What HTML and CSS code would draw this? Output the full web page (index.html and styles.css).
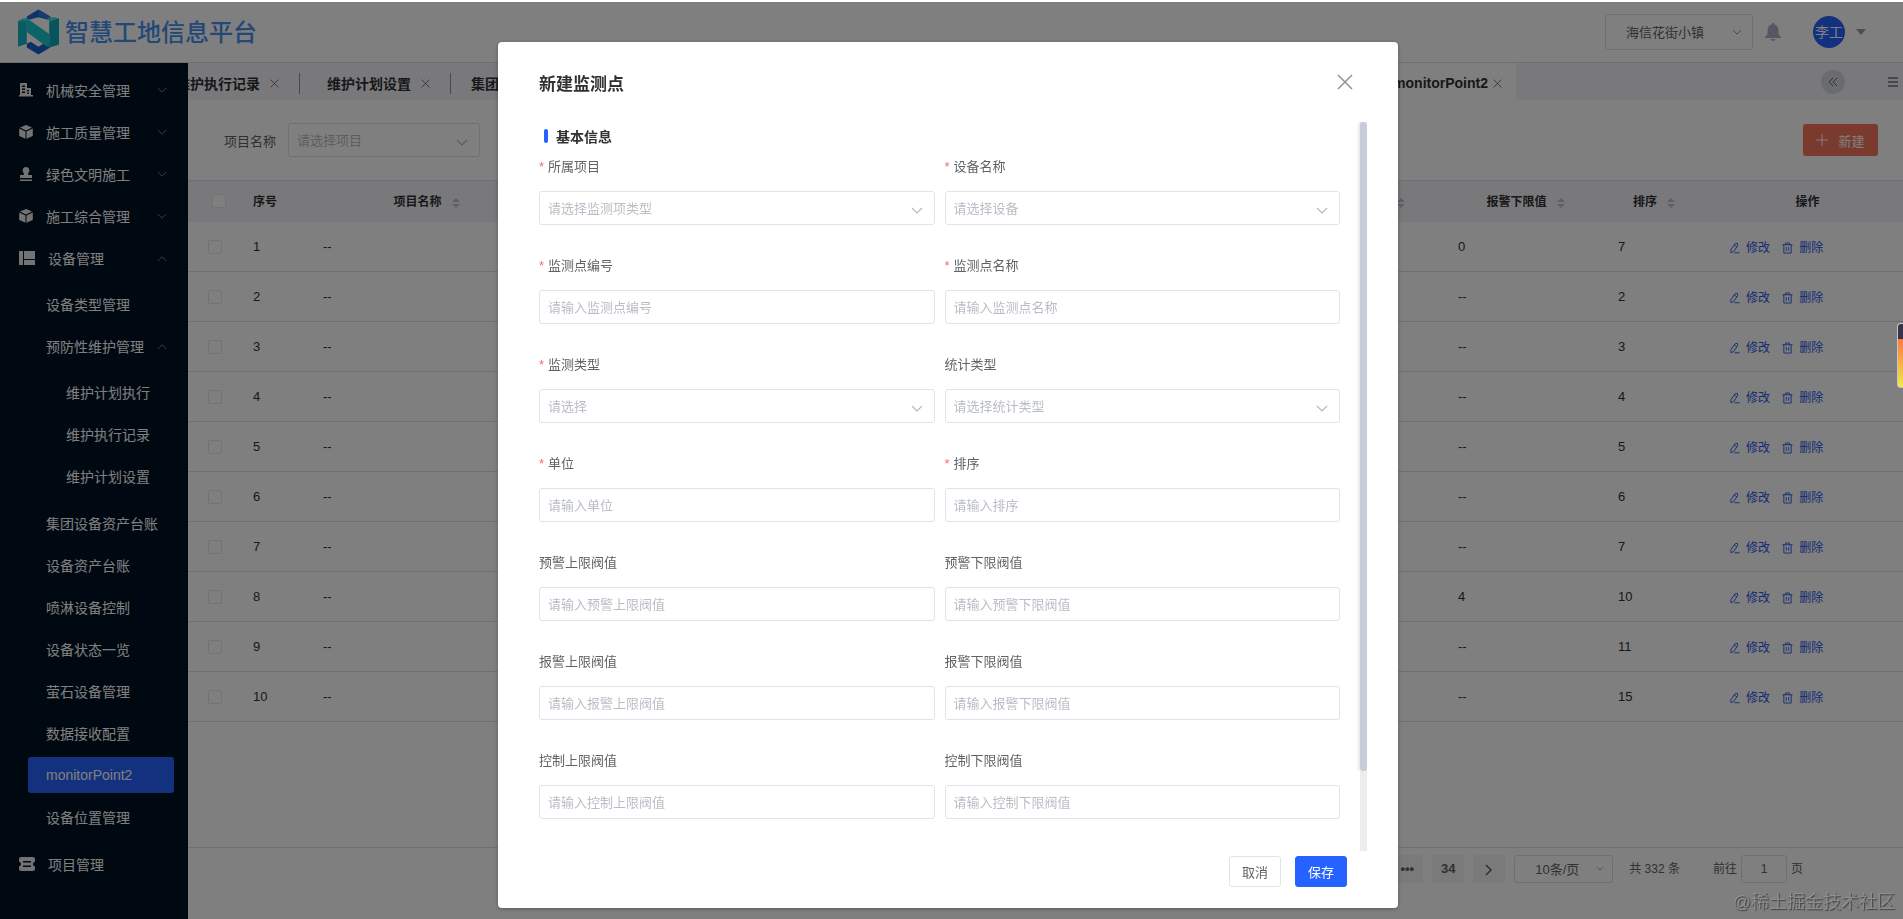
FILE: index.html
```html
<!DOCTYPE html>
<html lang="zh-CN">
<head>
    <meta charset="UTF-8">
    <meta name="viewport" content="width=device-width, initial-scale=1.0">
    <title>智慧工地信息平台</title>
    <link rel="stylesheet" href="styles.css">
</head>
<body>
    <!-- shared icons -->
    <svg class="sprite" aria-hidden="true">
        <symbol id="i-down" viewBox="0 0 12 8"><path d="M1 1l5 5 5-5" fill="none" stroke="currentColor"/></symbol>
        <symbol id="i-up" viewBox="0 0 12 8"><path d="M1 7l5-5 5 5" fill="none" stroke="currentColor"/></symbol>
        <symbol id="i-close" viewBox="0 0 16 16"><path d="M1 1l14 14M15 1L1 15" fill="none" stroke="currentColor" stroke-width="1.5"/></symbol>
        <symbol id="i-cube" viewBox="0 0 14 14"><path d="M7 0l6 2.6L7 5.4 1 2.6zM.2 3.6l6.3 2.8v7.4L.2 11zM13.8 3.6L7.5 6.4v7.4l6.3-2.8z" fill="currentColor"/></symbol>
        <symbol id="i-edit" viewBox="0 0 12 12"><path d="M6.500 1.500L9 .800 9.500 3.300 5 10 2 11 2 8zM6 11.200h5.500M6 3l2.500 1.600" fill="none" stroke="currentColor"/></symbol>
        <symbol id="i-trash" viewBox="0 0 12 12"><path d="M.5 2.500h11M2 2.500v9h8v-9M4 2.500v-2h4v2M4.700 5v4M7.300 5v4" fill="none" stroke="currentColor"/></symbol>
    </svg>

    <div class="app">
        <header class="topbar">
            <svg class="logo" viewBox="0 0 42 46">
                <path d="M21 0l12 7v4l-12-3-12 3V7z" fill="#1b66cf"/>
                <path d="M21 0l12 7v4l-12-5z" fill="#2f7be0"/>
                <path d="M21 46L9 39v-4l4-2 8 5 8-5 4 2v4z" fill="#1b5fc8"/>
                <path d="M0 12l9-3v26l-9 3z" fill="#12b5c5"/>
                <path d="M32 12l10-3v27l-10 3z" fill="#10a9b8"/>
                <path d="M9 9l23 16v14l-4-2L9 23z" fill="#18c8cc"/>
                <path d="M0 12l5-3 9 1-5 2zM32 12l-2-3 7-1 5 1z" fill="#3fd8dc"/>
            </svg>
            <span class="brand">智慧工地信息平台</span>
            <select class="project" aria-label="项目"><option>海信花街小镇</option></select>
            <svg class="bell" viewBox="0 0 16 18"><path d="M8 0c1 0 1.500.700 1.500 1.500C12 2.200 13.500 4.500 13.500 7v4.500L16 14v1H0v-1l2.500-2.500V7C2.500 4.500 4 2.200 6.500 1.500 6.500.700 7 0 8 0zM5.500 16h5c-.3 1.200-1.300 2-2.500 2s-2.200-.8-2.500-2z" fill="currentColor"/></svg>
            <span class="avatar">李工</span>
            <span class="caret"></span>
        </header>

        <div class="layout">
            <nav class="sidebar">
                <ul class="menu">
                    <li><a href="#"><svg class="ico" viewBox="0 0 14 14"><path d="M1 0h7v5h4v7h2v1.500H0V12h1zM3 2.500v1.500h3V2.500zM3 5.500V7h3V5.500zM3 8.500V10h3V8.500zM8 7v1.200h2V7zM8 9.500v1.200h2V9.500z" fill="currentColor" fill-rule="evenodd"/></svg>机械安全管理<svg class="arrow"><use href="#i-down"/></svg></a></li>
                    <li><a href="#"><svg class="ico"><use href="#i-cube"/></svg>施工质量管理<svg class="arrow"><use href="#i-down"/></svg></a></li>
                    <li><a href="#"><svg class="ico" viewBox="0 0 14 14"><path d="M7 0a3.500 3.500 0 0 1 2.200 6.200V8H13v3H1V8h3.800V6.200A3.500 3.500 0 0 1 7 0zM1 12.500h12V14H1z" fill="currentColor"/></svg>绿色文明施工<svg class="arrow"><use href="#i-down"/></svg></a></li>
                    <li><a href="#"><svg class="ico"><use href="#i-cube"/></svg>施工综合管理<svg class="arrow"><use href="#i-down"/></svg></a></li>
                    <li><a href="#"><svg class="ico ico-wide" viewBox="0 0 16 14"><path d="M0 0h4v14H0zM5 0h11v8H5zM5 9h11v5H5z" fill="currentColor"/></svg>设备管理<svg class="arrow"><use href="#i-up"/></svg></a></li>
                </ul>
                <ul class="menu sub">
                    <li><a href="#">设备类型管理</a></li>
                    <li><a href="#">预防性维护管理<svg class="arrow"><use href="#i-up"/></svg></a></li>
                </ul>
                <ul class="menu sub third">
                    <li><a href="#">维护计划执行</a></li>
                    <li><a href="#">维护执行记录</a></li>
                    <li><a href="#">维护计划设置</a></li>
                </ul>
                <ul class="menu sub last">
                    <li><a href="#">集团设备资产台账</a></li>
                    <li><a href="#">设备资产台账</a></li>
                    <li><a href="#">喷淋设备控制</a></li>
                    <li><a href="#">设备状态一览</a></li>
                    <li><a href="#">萤石设备管理</a></li>
                    <li><a href="#">数据接收配置</a></li>
                    <li><a href="#" class="active">monitorPoint2</a></li>
                    <li><a href="#">设备位置管理</a></li>
                </ul>
                <ul class="menu">
                    <li><a href="#"><svg class="ico ico-wide" viewBox="0 0 16 14"><path d="M2 0h12q2 0 2 2v2.500q-2 .5-2 2.500t2 2.500V12q0 2-2 2H2q-2 0-2-2V9.500Q2 9 2 7T0 4.500V2q0-2 2-2zM4 4v1.500h8V4zM4 8.500V10h8V8.500z" fill="currentColor" fill-rule="evenodd"/></svg>项目管理</a></li>
                </ul>
            </nav>

            <main class="content">
                <div class="tabs">
                    <div class="tab-list">
                        <a href="#" class="tab first">维护执行记录<svg><use href="#i-close"/></svg></a>
                        <a href="#" class="tab">维护计划设置<svg><use href="#i-close"/></svg></a>
                        <a href="#" class="tab">集团设备资产台账<svg><use href="#i-close"/></svg></a>
                        <a href="#" class="tab current">monitorPoint2<svg><use href="#i-close"/></svg></a>
                    </div>
                    <div class="tab-tools">
                        <button class="fold" aria-label="收起"><svg viewBox="0 0 10 10"><path d="M5 1L1 5l4 4M9 1L5 5l4 4" fill="none" stroke="currentColor"/></svg></button>
                        <button class="more" aria-label="更多"><svg viewBox="0 0 10 10"><path d="M0 1h10M0 5h10M0 9h10" stroke="currentColor" stroke-width="1.200"/></svg></button>
                    </div>
                </div>

                <div class="filter">
                    <label for="project">项目名称</label>
                    <select id="project" class="field"><option>请选择项目</option></select>
                    <button class="btn-new"><svg viewBox="0 0 12 12"><path d="M6 0v12M0 6h12" stroke="currentColor"/></svg>新建</button>
                </div>

                <div class="table-wrap">
                    <table>
                        <colgroup>
                            <col class="c-check"><col class="c-index"><col class="c-name"><col><col><col><col>
                            <col class="c-limit"><col class="c-limit"><col class="c-sort"><col class="c-op">
                        </colgroup>
                        <thead>
                            <tr>
                                <th class="check"><input type="checkbox" aria-label="全选"></th>
                                <th class="left">序号</th>
                                <th>项目名称<i class="sort"></i></th>
                                <th>设备名称<i class="sort"></i></th>
                                <th>监测点编号<i class="sort"></i></th>
                                <th>监测点名称<i class="sort"></i></th>
                                <th>监测类型<i class="sort"></i></th>
                                <th>报警上限值<i class="sort"></i></th>
                                <th>报警下限值<i class="sort"></i></th>
                                <th>排序<i class="sort"></i></th>
                                <th class="op-head">操作</th>
                            </tr>
                        </thead>
                        <tbody id="rows"></tbody>
                    </table>
                </div>

                <div class="pager">
                    <button class="page">•••</button>
                    <button class="page">34</button>
                    <button class="page" aria-label="下一页"><svg viewBox="0 0 8 12"><path d="M1 1l5 5-5 5" fill="none" stroke="currentColor" stroke-width="1.500"/></svg></button>
                    <select class="size" aria-label="每页条数"><option>10条/页</option></select>
                    <span class="total">共 332 条</span>
                    <label for="jump">前往</label>
                    <input id="jump" class="jump" type="text" value="1">
                    <span>页</span>
                </div>
            </main>
        </div>
    </div>

    <div class="mask">
        <div class="dialog" role="dialog" aria-labelledby="dialog-title">
            <div class="dialog-head">
                <h2 id="dialog-title">新建监测点</h2>
                <button class="close" aria-label="关闭"><svg><use href="#i-close"/></svg></button>
            </div>
            <div class="dialog-body">
                <form class="form">
                    <h3>基本信息</h3>
                    <div class="grid">
                        <div class="item required"><label for="f1">所属项目</label><select id="f1" class="field"><option>请选择监测项类型</option></select></div>
                        <div class="item required"><label for="f2">设备名称</label><select id="f2" class="field"><option>请选择设备</option></select></div>
                        <div class="item required"><label for="f3">监测点编号</label><input id="f3" class="field" type="text" placeholder="请输入监测点编号"></div>
                        <div class="item required"><label for="f4">监测点名称</label><input id="f4" class="field" type="text" placeholder="请输入监测点名称"></div>
                        <div class="item required"><label for="f5">监测类型</label><select id="f5" class="field"><option>请选择</option></select></div>
                        <div class="item"><label for="f6">统计类型</label><select id="f6" class="field"><option>请选择统计类型</option></select></div>
                        <div class="item required"><label for="f7">单位</label><input id="f7" class="field" type="text" placeholder="请输入单位"></div>
                        <div class="item required"><label for="f8">排序</label><input id="f8" class="field" type="text" placeholder="请输入排序"></div>
                        <div class="item"><label for="f9">预警上限阀值</label><input id="f9" class="field" type="text" placeholder="请输入预警上限阀值"></div>
                        <div class="item"><label for="f10">预警下限阀值</label><input id="f10" class="field" type="text" placeholder="请输入预警下限阀值"></div>
                        <div class="item"><label for="f11">报警上限阀值</label><input id="f11" class="field" type="text" placeholder="请输入报警上限阀值"></div>
                        <div class="item"><label for="f12">报警下限阀值</label><input id="f12" class="field" type="text" placeholder="请输入报警下限阀值"></div>
                        <div class="item"><label for="f13">控制上限阀值</label><input id="f13" class="field" type="text" placeholder="请输入控制上限阀值"></div>
                        <div class="item"><label for="f14">控制下限阀值</label><input id="f14" class="field" type="text" placeholder="请输入控制下限阀值"></div>
                    </div>
                </form>
                <div class="scrollbar"><div class="thumb"></div></div>
            </div>
            <div class="dialog-foot">
                <button class="btn">取消</button>
                <button class="btn primary">保存</button>
            </div>
        </div>
    </div>

    <div class="side-widget"></div>
    <div class="watermark">@稀土掘金技术社区</div>

    <script>
        // lower alarm limit and sort number of each row
        const rows = [['0', 7], ['--', 2], ['--', 3], ['--', 4], ['--', 5], ['--', 6], ['--', 7], ['4', 10], ['--', 11], ['--', 15]];

        document.getElementById('rows').innerHTML = rows.map((row, i) => `
            <tr>
                <td class="check"><input type="checkbox" aria-label="选择第${i + 1}行"></td>
                <td>${i + 1}</td>
                <td>--</td><td>--</td><td>--</td><td>--</td><td>--</td><td>--</td>
                <td>${row[0]}</td>
                <td>${row[1]}</td>
                <td class="op">
                    <a href="#"><svg><use href="#i-edit"/></svg>修改</a>
                    <a href="#"><svg><use href="#i-trash"/></svg>删除</a>
                </td>
            </tr>`).join('');
    </script>
</body>
</html>
```
FILE: styles.css
```css
* {
    box-sizing: border-box;
}
body {
    margin: 0;
    font-family: "Liberation Sans", "Noto Sans CJK SC", sans-serif;
    font-size: 13px;
    color: #303133;
    background: #fff;
    overflow: hidden;
}
ul, h2, h3 {
    margin: 0;
    padding: 0;
    list-style: none;
}
a {
    color: inherit;
    text-decoration: none;
}
button, input, select {
    font: inherit;
    color: inherit;
    margin: 0;
}
button {
    cursor: pointer;
    padding: 0;
}
select {
    appearance: none;
}
.sprite {
    display: none;
}
.app {
    height: 100vh;
    padding-top: 2px;
    display: flex;
    flex-direction: column;
}

/* top bar */
.topbar {
    height: 61px;
    flex: none;
    display: flex;
    align-items: center;
    padding: 0 37px 0 18px;
    border-bottom: 1px solid #dcdee2;
}
.logo {
    width: 41px;
    height: 46px;
}
.brand {
    margin-left: 6px;
    padding-bottom: 3px;
    font-size: 24px;
    font-weight: 500;
    color: #4791ee;
}
.project {
    width: 148px;
    height: 36px;
    margin-left: auto;
    padding: 0 20px;
    border: 1px solid #dcdfe6;
    border-radius: 3px;
    color: #606266;
    background: url("data:image/svg+xml,%3Csvg xmlns='http://www.w3.org/2000/svg' width='10' height='7'%3E%3Cpath d='M1 1l4 4 4-4' fill='none' stroke='%23909399'/%3E%3C/svg%3E") no-repeat right 10px center;
}
.bell {
    width: 16px;
    height: 18px;
    margin-left: 12px;
    color: #a9b2c3;
}
.avatar {
    width: 32px;
    height: 32px;
    margin-left: 32px;
    border-radius: 50%;
    background: #2662ff;
    color: #fff;
    font-size: 14px;
    line-height: 32px;
    text-align: center;
}
.caret {
    margin-left: 11px;
    border: 5px solid transparent;
    border-top: 6px solid #9a9ca0;
    border-bottom: 0;
}

/* side menu */
.layout {
    flex: 1;
    min-height: 0;
    display: flex;
}
.sidebar {
    width: 188px;
    flex: none;
    padding-top: 6px;
    background: #001022;
    color: #fff;
    font-size: 14px;
    overflow: hidden;
}
.menu a {
    height: 42px;
    display: flex;
    align-items: center;
    padding: 0 21px 0 19px;
}
.ico {
    width: 14px;
    height: 14px;
    margin-right: 13px;
    color: #e6e6e6;
}
.ico-wide {
    width: 16px;
}
.arrow {
    width: 10px;
    height: 7px;
    margin-left: auto;
    color: #8d939c;
}
.sub {
    padding-top: 4px;
}
.sub li {
    padding: 3px 14px 3px 28px;
}
.sub a {
    height: 36px;
    padding: 0 7px 0 18px;
    border-radius: 3px;
}
.third a {
    padding-left: 38px;
}
.last {
    padding: 5px 0;
}
.sub .active {
    background: #2662ff;
}

/* tabs */
.content {
    flex: 1;
    min-width: 0;
    display: flex;
    flex-direction: column;
}
.tabs {
    height: 37px;
    flex: none;
    display: flex;
    background: #f2f3f7;
}
.tab-list {
    flex: 1;
    display: flex;
    overflow: hidden;
}
.tab {
    display: flex;
    align-items: center;
    padding: 3px 20px 0 28px;
    font-size: 14px;
    font-weight: bold;
    white-space: nowrap;
    position: relative;
}
.tab svg {
    width: 9px;
    height: 9px;
    margin-left: 10px;
    color: #606266;
}
.tab + .tab:not(.current)::before {
    content: "";
    position: absolute;
    left: 0;
    top: 10px;
    height: 21px;
    border-left: 1px solid #909399;
}
.tab.first {
    margin-left: -40px;
}
.tab:nth-child(3) {
    padding-left: 21px;
}
.tab.current {
    margin-left: auto;
    padding-right: 14px;
    background: #fff;
}
.tab.current svg {
    margin-left: 5px;
}
.tab-tools {
    width: 387px;
    display: flex;
    align-items: center;
    justify-content: flex-end;
    gap: 43px;
    padding-right: 5px;
}
.tab-tools button {
    border: 0;
    background: none;
    line-height: 0;
}
.tab-tools svg {
    width: 10px;
    height: 10px;
}
.tab-tools .fold {
    width: 24px;
    height: 24px;
    border-radius: 50%;
    background: #d4d8e0;
    color: #606266;
}

/* filter row */
.filter {
    height: 80px;
    flex: none;
    display: flex;
    align-items: center;
    padding: 0 25px 0 36px;
    color: #606266;
}
.field {
    width: 100%;
    height: 34px;
    padding: 0 8px;
    border: 1px solid #e0e3e9;
    border-radius: 3px;
    background-color: #fff;
    outline: none;
}
select.field {
    color: #b9bdc6;
    background: #fff url("data:image/svg+xml,%3Csvg xmlns='http://www.w3.org/2000/svg' width='12' height='8'%3E%3Cpath d='M1 1l5 5 5-5' fill='none' stroke='%23b4b8c0' stroke-width='1.2'/%3E%3C/svg%3E") no-repeat right 11px top 15px;
}
.field::placeholder {
    color: #b9bdc6;
}
.filter .field {
    width: 192px;
    margin-left: 12px;
}
.btn-new {
    width: 75px;
    height: 32px;
    margin-left: auto;
    display: flex;
    align-items: center;
    justify-content: center;
    gap: 10px;
    border: 0;
    border-radius: 3px;
    background: #f5775c;
    color: #fff;
}
.btn-new svg {
    width: 12px;
    height: 12px;
}

/* table */
.table-wrap {
    flex: 1;
    border-top: 1px solid #dcdee2;
}
table {
    width: 100%;
    table-layout: fixed;
    border-collapse: separate;
    border-spacing: 0;
}
.c-check {
    width: 55px;
}
.c-index {
    width: 70px;
}
.c-name {
    width: 232px;
}
.c-limit {
    width: 160px;
}
.c-sort {
    width: 97px;
}
.c-op {
    width: 198px;
}
th {
    height: 41px;
    padding: 0 10px 2px;
    font-size: 12px;
    font-weight: bold;
    background: #f2f3f7;
    white-space: nowrap;
}
td {
    height: 50px;
    padding: 0 10px;
    border-bottom: 1px solid #dfe1e6;
    white-space: nowrap;
}
th.left {
    text-align: left;
}
th.check {
    text-align: left;
    padding-left: 24px;
}
th.op-head {
    padding-left: 17px;
}
td.check {
    padding-left: 20px;
}
.check input {
    appearance: none;
    display: block;
    width: 14px;
    height: 14px;
    border: 1px solid #e4e6eb;
    border-radius: 2px;
    background: #fff;
}
.sort {
    display: inline-flex;
    flex-direction: column;
    gap: 2px;
    margin: 0 5px 0 10px;
    vertical-align: middle;
}
.sort::before, .sort::after {
    content: "";
    border: 4px solid transparent;
}
.sort::before {
    border-top: 0;
    border-bottom-color: #bcc0c8;
}
.sort::after {
    border-bottom: 0;
    border-top-color: #bcc0c8;
}
.op {
    padding-left: 24px;
    font-size: 12px;
    color: #2656e8;
}
.op a {
    margin-right: 9px;
}
.op svg {
    width: 11px;
    height: 12px;
    margin-right: 6px;
    vertical-align: -2px;
}

/* pager */
.pager {
    height: 72px;
    flex: none;
    display: flex;
    justify-content: flex-end;
    align-items: flex-start;
    gap: 9px;
    padding: 7px 100px 0 0;
    border-top: 1px solid #dcdee2;
    font-size: 12px;
    line-height: 28px;
    color: #606266;
}
.page {
    min-width: 32px;
    height: 28px;
    border: 0;
    border-radius: 2px;
    background: #f4f4f5;
    font-size: 13px;
    font-weight: bold;
}
.page svg {
    width: 8px;
    height: 12px;
    vertical-align: middle;
}
.size {
    width: 99px;
    height: 28px;
    padding: 0 20px;
    border: 1px solid #dcdfe6;
    border-radius: 3px;
    font-size: 13px;
    background: url("data:image/svg+xml,%3Csvg xmlns='http://www.w3.org/2000/svg' width='8' height='6'%3E%3Cpath d='M1 1l3 3 3-3' fill='none' stroke='%23a4a8b0'/%3E%3C/svg%3E") no-repeat right 8px center;
}
.total {
    margin: 0 24px 0 7px;
}
.pager label {
    margin-right: -5px;
}
.jump {
    width: 46px;
    height: 28px;
    margin-right: -5px;
    border: 1px solid #dcdfe6;
    border-radius: 3px;
    text-align: center;
    background: #fff;
}

/* dialog */
.mask {
    position: fixed;
    top: 2px;
    right: 0;
    bottom: 0;
    left: 0;
    padding: 40px 7px 0 0;
    background: rgba(0, 0, 0, 0.5);
}
.dialog {
    width: 900px;
    max-width: 100%;
    margin: 0 auto;
    background: #fff;
    border-radius: 4px;
    box-shadow: 0 1px 4px rgba(0, 0, 0, 0.3);
}
.dialog-head {
    height: 80px;
    display: flex;
    align-items: center;
    justify-content: space-between;
    padding: 0 45px 0 41px;
}
.dialog-head h2 {
    font-size: 17px;
}
.close {
    border: 0;
    background: none;
    color: #909399;
    line-height: 0;
}
.close svg {
    width: 16px;
    height: 16px;
}
.dialog-body {
    height: calc(100vh - 190px);
    display: flex;
    gap: 20px;
    padding: 0 31px 0 41px;
}
.form {
    flex: 1;
    overflow: hidden;
}
.form h3 {
    display: flex;
    align-items: center;
    height: 28px;
    margin: 0 0 5px 5px;
    font-size: 14px;
}
.form h3::before {
    content: "";
    width: 4px;
    height: 14px;
    margin-right: 8px;
    border-radius: 2px;
    background: #2662ff;
}
.grid {
    display: grid;
    grid-template-columns: 1fr 1fr;
    gap: 29px 10px;
}
.item label {
    display: block;
    margin-bottom: 12px;
    line-height: 24px;
    color: #606266;
}
.required label::before {
    content: "*";
    margin-right: 4px;
    color: #f56c6c;
}
.scrollbar {
    width: 7px;
    background: #ededed;
}
.thumb {
    height: 89%;
    border-radius: 3px;
    background: #c8cdd8;
    box-shadow: -2px 0 2px #e6ebf3;
}
.dialog-foot {
    display: flex;
    justify-content: flex-end;
    gap: 14px;
    padding: 5px 51px 21px;
}
.btn {
    width: 52px;
    height: 31px;
    border: 1px solid #e0e3e9;
    border-radius: 3px;
    background: #fff;
    color: #606266;
}
.btn.primary {
    border-color: #2662ff;
    background: #2662ff;
    color: #fff;
}

.side-widget {
    position: fixed;
    top: 323px;
    right: 0;
    width: 6px;
    height: 65px;
    border: 1px solid #c9c6d0;
    border-right: 0;
    border-radius: 4px 0 0 4px;
    background: linear-gradient(#37344c 15px, #f97a4e 15px, #f4b13e 60%, #f3ea45);
}
.watermark {
    position: fixed;
    right: 8px;
    bottom: 6px;
    font-size: 18px;
    color: rgba(150, 150, 150, 0.8);
    text-shadow: 1px 1px 1px rgba(50, 50, 50, 0.8);
}
```
